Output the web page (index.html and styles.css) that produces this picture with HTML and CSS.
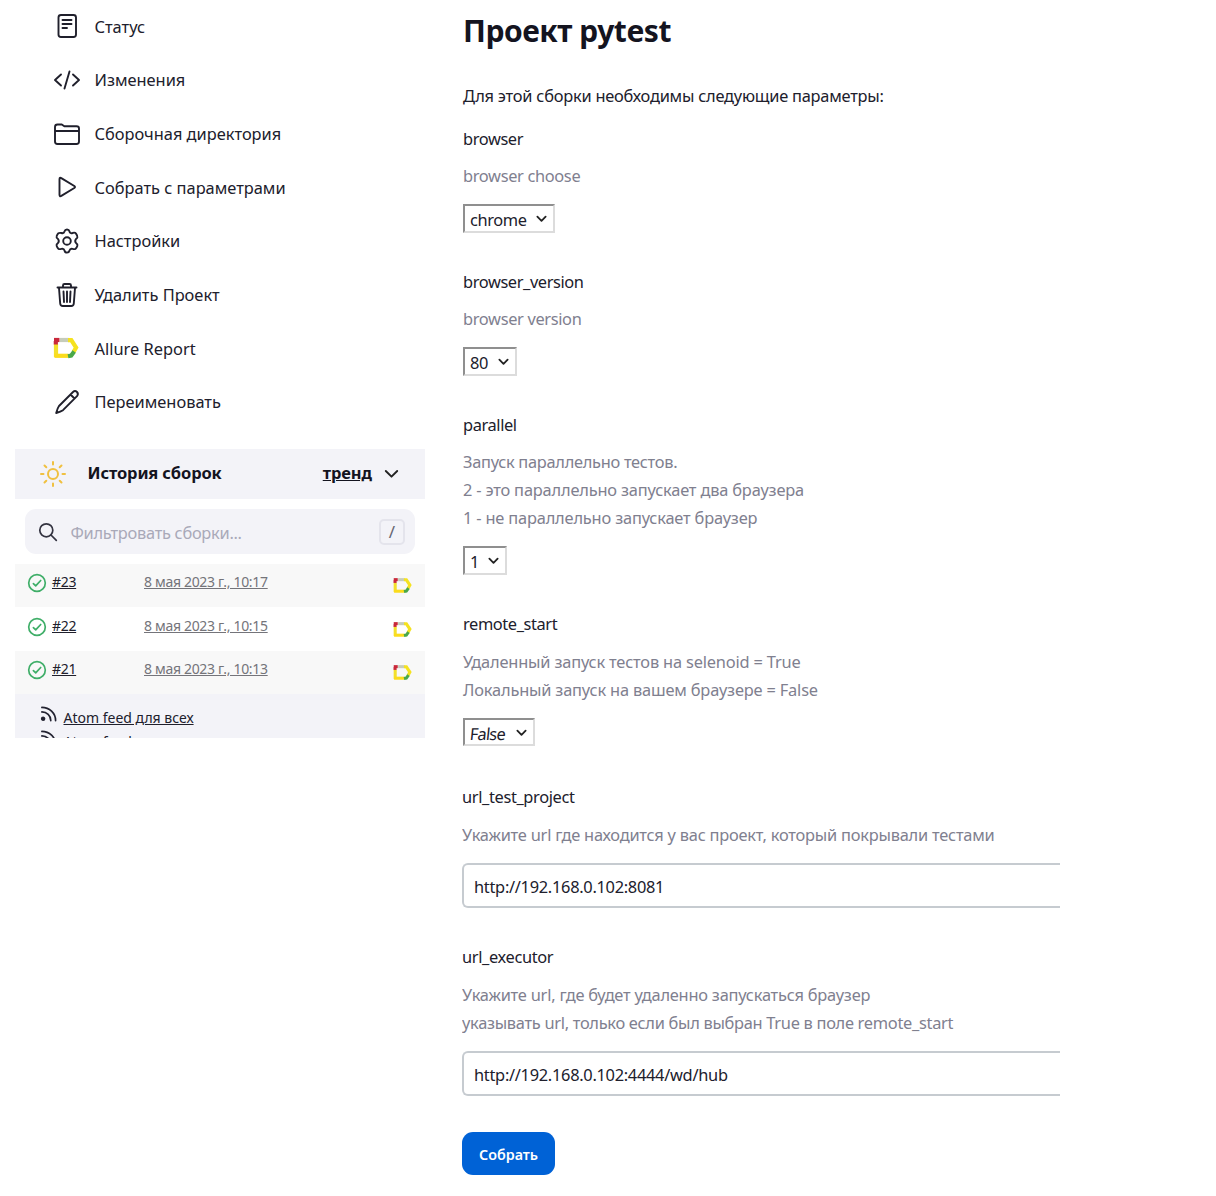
FILE: index.html
```html
<!DOCTYPE html>
<html lang="ru">
<head>
<meta charset="utf-8">
<title>Проект pytest</title>
<link rel="stylesheet" href="styles.css">
</head>
<body>
<svg class="sprite" aria-hidden="true">
  <symbol id="allure" viewBox="0 0 26 22">
    <g fill="none" stroke-width="4.200">
      <path d="M3 7v13" stroke="#f3e02b"/>
      <path d="M1.500 18.800h14" stroke="#fbdc1c"/>
      <path d="M7 3h9" stroke="#c6ccba"/>
      <path d="M15 3.200h3.300l4.800 7.300-2.600 4.500" stroke="#f5e21f"/>
      <path d="M15 19.200l3.200-.6 3-4" stroke="#4aa848"/>
      <path d="M1 3h5.500" stroke="#c9283a"/>
      <path d="M2.800 4v3.500" stroke="#c9283a"/>
    </g>
  </symbol>
  <symbol id="ok" viewBox="0 0 20 20">
    <g fill="none" stroke="#3fae68" stroke-width="1.700" stroke-linecap="round" stroke-linejoin="round"><circle cx="10" cy="10" r="8.300"/><path d="M6.400 10.600l2.300 2.200 5-5.300"/></g>
  </symbol>
  <symbol id="feed" viewBox="0 0 18 18">
    <g fill="none" stroke="#222230" stroke-width="1.800" stroke-linecap="round"><path d="M2 1.500c8 0 14.500 6 14.500 13.900M2 6.300c5.200 0 9.400 4 9.400 9.100"/><circle cx="3.300" cy="13.500" r="1.500" fill="#222230"/></g>
  </symbol>
  <symbol id="chev" viewBox="0 0 12 8">
    <path d="M1.500 1.500L6 6l4.500-4.500" fill="none" stroke="#222" stroke-width="2" stroke-linecap="round" stroke-linejoin="round"/>
  </symbol>
  <symbol id="chev-thin" viewBox="0 0 15 10">
    <path d="M1.800 2L7.500 7.700 13.200 2" fill="none" stroke="#222" stroke-width="1.900" stroke-linecap="round" stroke-linejoin="round"/>
  </symbol>
</svg>
<div class="page">
  <aside class="sidebar">
    <nav class="menu">
      <a class="item"><svg class="ico" viewBox="0 0 28 28"><rect x="5.500" y="3" width="17.500" height="22" rx="2.500"/><path d="M9.500 8h9M9.500 12h9M9.500 16h4.500"/></svg><span>Статус</span></a>
      <a class="item"><svg class="ico" viewBox="0 0 28 28"><path d="M8 8.500L2 14l6 5.500M20 8.500l6 5.500-6 5.500M16.500 5.500l-5 17"/></svg><span>Изменения</span></a>
      <a class="item"><svg class="ico" viewBox="0 0 28 28"><path d="M2 21.500V7Q2 4.500 4.500 4.500h4.300l2.500 1.700h12.200Q26 6.200 26 8.500v13Q26 24 23.500 24h-19Q2 24 2 21.500zM2 11h24"/></svg><span>Сборочная директория</span></a>
      <a class="item"><svg class="ico" viewBox="0 0 28 28"><path d="M6.500 6.300q0-2.200 1.800-1.200l13 7.900q1.400 1 0 2l-13 7.900q-1.800 1-1.800-1.200z"/></svg><span>Собрать с параметрами</span></a>
      <a class="item"><svg class="ico" viewBox="0 0 28 28"><path d="M11.600 4.300q.4-1.800 2.400-1.800t2.400 1.800q.6 2.600 3.200 1.700 2.300-.9 3.400.6 1.700 2.300 1.400 3.700-.3.900-1.400 1.700-1.600 2 0 4 1.900 1.400 1.400 2.700-.7 2-1.800 3-.9.700-3 .2-2.500-.6-3.200 1.800-.4 1.900-2.400 1.900t-2.400-1.900q-.7-2.400-3.200-1.800-2.100.5-3-.2-1.100-1-1.800-3-.5-1.300 1.400-2.700 1.600-2 0-4-1.900-1.400-1.400-2.700.7-2 1.800-3 .9-.7 3-.3 2.500.7 3.200-1.700z"/><circle cx="14" cy="14" r="3.800"/></svg><span>Настройки</span></a>
      <a class="item"><svg class="ico" viewBox="0 0 28 28"><path d="M4.500 6.500h19M10 6V4.500Q10 3 11.500 3h5Q18 3 18 4.500V6M6 7l1.200 15.500q.2 2.500 2.600 2.500h8.400q2.400 0 2.600-2.500L22 7M10.500 10.500l.5 10.500M14 10.500V21M17.500 10.500L17 21"/></svg><span>Удалить Проект</span></a>
      <a class="item"><svg class="logo"><use href="#allure"/></svg><span>Allure Report</span></a>
      <a class="item"><svg class="ico" viewBox="0 0 28 28"><path d="M20 4l-14 14q-1.500 2-2.800 7 4.600-1.300 6.800-2.800l14-14q1.800-2.200 0-4.200-2-1.800-4 0zM17.500 6.500l4 4"/></svg><span>Переименовать</span></a>
    </nav>
    <section class="history">
      <header class="hist-head">
        <svg class="sun" viewBox="0 0 28 28"><circle cx="14" cy="14" r="5"/><path d="M14 2v2.500M14 23.500V26M2 14h2.500M23.500 14H26M5.500 5.500l1.800 1.800M20.700 20.700l1.800 1.800M5.500 22.500l1.800-1.800M20.700 7.300l1.800-1.800"/></svg>
        <span class="hist-title">История сборок</span>
        <a class="trend">тренд</a>
        <svg class="chev-lg"><use href="#chev-thin"/></svg>
      </header>
      <div class="filter">
        <svg class="lens" viewBox="0 0 20 20"><circle cx="8.300" cy="8.300" r="6.500"/><path d="M13 13l5.300 5.300"/></svg>
        <span class="placeholder">Фильтровать сборки...</span>
        <kbd class="key">/</kbd>
      </div>
      <div class="build odd"><svg class="ok"><use href="#ok"/></svg><a class="num">#23</a><a class="date">8 мая 2023 г., 10:17</a><svg class="logo-sm"><use href="#allure"/></svg></div>
      <div class="build"><svg class="ok"><use href="#ok"/></svg><a class="num">#22</a><a class="date">8 мая 2023 г., 10:15</a><svg class="logo-sm"><use href="#allure"/></svg></div>
      <div class="build odd"><svg class="ok"><use href="#ok"/></svg><a class="num">#21</a><a class="date">8 мая 2023 г., 10:13</a><svg class="logo-sm"><use href="#allure"/></svg></div>
      <footer class="feeds">
        <div class="feed"><svg class="rss"><use href="#feed"/></svg><a class="atom">Atom feed для всех</a></div>
        <div class="feed"><svg class="rss"><use href="#feed"/></svg><a class="atom">Atom feed</a></div>
      </footer>
    </section>
  </aside>
  <main class="main">
    <h1 class="title">Проект pytest</h1>
    <p class="intro">Для этой сборки необходимы следующие параметры:</p>
    <div class="param">
      <div class="label">browser</div>
      <div class="desc latin">browser choose</div>
      <div class="select w-chrome"><span>chrome</span><svg class="chev"><use href="#chev"/></svg></div>
    </div>
    <div class="param">
      <div class="label">browser_version</div>
      <div class="desc latin">browser version</div>
      <div class="select w-version"><span>80</span><svg class="chev"><use href="#chev"/></svg></div>
    </div>
    <div class="param">
      <div class="label">parallel</div>
      <div class="desc"><span class="snug">Запуск параллельно тестов.</span><br>2 - это параллельно запускает два браузера<br>1 - не параллельно запускает браузер</div>
      <div class="select w-parallel"><span>1</span><svg class="chev"><use href="#chev"/></svg></div>
    </div>
    <div class="param">
      <div class="label">remote_start</div>
      <div class="desc">Удаленный запуск тестов на selenoid = True<br>Локальный запуск на вашем браузере = False</div>
      <div class="select w-remote"><span class="slant">False</span><svg class="chev"><use href="#chev"/></svg></div>
    </div>
    <div class="param wide">
      <div class="label">url_test_project</div>
      <div class="desc loose">Укажите url где находится у вас проект, который покрывали тестами</div>
      <div class="field">http://192.168.0.102:8081</div>
    </div>
    <div class="param wide">
      <div class="label">url_executor</div>
      <div class="desc loose">Укажите url, где будет удаленно запускаться браузер<br><span class="snug">указывать url, только если был выбран True в поле remote_start</span></div>
      <div class="field">http://192.168.0.102:4444/wd/hub</div>
    </div>
    <button class="build-btn">Собрать</button>
  </main>
</div>
</body>
</html>
```
FILE: styles.css
```css
* { box-sizing: border-box; }
body { margin: 0; background: #fff; color: #20202c; font-family: "Noto Sans", "Open Sans", sans-serif; font-size: 16.4px; white-space: nowrap; }
.sprite { position: absolute; width: 0; height: 0; }
.page { display: flex; width: 1216px; height: 1196px; overflow: hidden; }

.sidebar { width: 425px; padding-left: 15px; flex: none; }
.menu { padding-left: 38px; height: 449px; }
.item { display: flex; align-items: center; height: 53.65px; gap: 13.5px; padding-bottom: 1px; }
.ico { width: 28px; height: 28px; fill: none; stroke: #20202c; stroke-width: 1.9; stroke-linecap: round; stroke-linejoin: round; }
.logo { width: 26px; height: 22px; margin-right: 2px; }

.history { width: 410px; height: 289px; overflow: hidden; }
.hist-head { display: flex; align-items: center; height: 50px; background: #f3f3f8; padding: 0 26px 0 24px; font-weight: 700; font-size: 16.5px; color: #14141f; }
.sun { width: 28px; height: 28px; fill: none; stroke: #f0c040; stroke-width: 2; stroke-linecap: round; margin-right: 20.5px; }
.hist-title { letter-spacing: -0.14px; margin-top: -3px; }
.trend { margin: -3px 0 0 auto; text-decoration: underline; letter-spacing: -0.1px; }
.chev-lg { width: 15px; height: 10px; margin-left: 12px; }
.filter { display: flex; align-items: center; height: 45px; margin: 10px; border-radius: 11px; background: #f3f3f8; padding: 0 10px 0 13px; color: #a9a9b8; }
.lens { width: 20px; height: 20px; fill: none; stroke: #333340; stroke-width: 1.7; stroke-linecap: round; margin-right: 12.5px; }
.placeholder { letter-spacing: -0.28px; padding-top: 1px; }
.key { margin-left: auto; width: 26px; height: 26px; border: 2px solid #e4e4ec; border-radius: 5px; font: 17px/21px "Noto Sans", sans-serif; text-align: center; color: #666672; }
.build { display: flex; align-items: center; height: 43.4px; padding: 0 13px 0 12px; font-size: 14px; }
.odd { background: #f8f8f8; }
.ok { width: 20px; height: 20px; margin: -5px 5px 0 0; }
.num { width: 92px; text-decoration: underline; margin-top: -8px; letter-spacing: -0.3px; }
.date { color: #74747a; text-decoration: underline; margin-top: -8px; letter-spacing: -0.32px; }
.logo-sm { width: 19px; height: 17px; margin-left: auto; }
.feeds { background: #f3f3f8; height: 60px; padding: 11px 0 0 25px; font-size: 14px; }
.feed { display: flex; height: 24px; align-items: center; gap: 6.5px; }
.rss { width: 17px; height: 17px; margin-top: -5px; }
.atom { text-decoration: underline; }

.main { width: 598px; margin-left: 37px; padding-left: 1px; overflow: hidden; }
.title { margin: 0; height: 62px; line-height: 62px; font-size: 30px; letter-spacing: -0.46px; color: #14141f; }
.intro { margin: 20px 0 14.6px; line-height: 28px; letter-spacing: -0.23px; }
.param { margin-bottom: 35.3px; }
.label { height: 28px; line-height: 28px; letter-spacing: -0.4px; }
.desc { margin: 9.3px 0 14px; line-height: 28px; color: #80808f; letter-spacing: -0.18px; }
.latin { letter-spacing: -0.34px; }
.snug { letter-spacing: -0.29px; }
.loose { margin-top: 10px; letter-spacing: -0.22px; }
.select { display: flex; align-items: center; justify-content: space-between; height: 28.7px; border: 2px solid #dcdcdc; border-top-color: #8f8f8f; border-left-color: #8f8f8f; padding: 2px 6px 0 5px; letter-spacing: -0.4px; }
.w-chrome { width: 92px; }
.w-version { width: 54px; }
.w-parallel { width: 44px; }
.w-remote { width: 72px; }
.chev { width: 11px; height: 8px; margin-top: -1px; }
.slant { transform: skewX(-6deg); letter-spacing: -0.8px; }
.wide { margin-left: -1px; position: relative; top: 1px; }
.wide .label { letter-spacing: -0.36px; }
.field { display: flex; align-items: center; height: 45px; border: 2px solid #c6cbd0; border-right: 0; border-radius: 6px 0 0 6px; padding: 2px 0 0 10px; letter-spacing: -0.29px; }
.build-btn { display: block; width: 93px; height: 43px; margin: 36.5px 0 0 -1px; border: 0; padding: 2px 0 0; border-radius: 11px; background: #0062d6; color: #fff; font: 600 14.3px "Noto Sans", sans-serif; }
```
